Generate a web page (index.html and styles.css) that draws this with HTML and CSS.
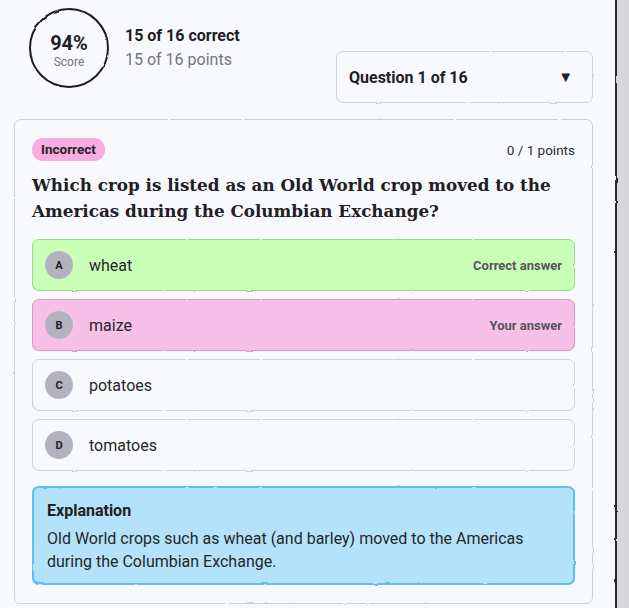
FILE: index.html
```html
<!DOCTYPE html>
<html>
<head>
<meta charset="utf-8">
<link rel="stylesheet" href="styles.css">
</head>
<body>
<svg class="defs" width="0" height="0" aria-hidden="true">
  <filter id="rough" x="-5%" y="-5%" width="110%" height="110%">
    <feTurbulence type="fractalNoise" baseFrequency="0.08" numOctaves="2" seed="3" result="n"/>
    <feDisplacementMap in="SourceGraphic" in2="n" scale="2.2" xChannelSelector="R" yChannelSelector="G"/>
  </filter>
</svg>
<div class="page">
  <div class="header">
    <div class="summary">
      <div class="score">
        <div class="score-num">94%</div>
        <div class="score-label">Score</div>
      </div>
      <div class="totals">
        <div class="correct">15 of 16 correct</div>
        <div class="points">15 of 16 points</div>
      </div>
    </div>
    <div class="select">
      <span>Question 1 of 16</span>
      <span class="caret">▼</span>
    </div>
  </div>

  <div class="card">
    <div class="card-top">
      <span class="pill">Incorrect</span>
      <span class="pts">0 / 1 points</span>
    </div>
    <h2 class="question">Which crop is listed as an Old World crop moved to the Americas during the Columbian Exchange?</h2>
    <div class="options">
      <div class="opt opt-correct"><span class="letter">A</span><span class="label">wheat</span><span class="tag">Correct answer</span></div>
      <div class="opt opt-wrong"><span class="letter">B</span><span class="label">maize</span><span class="tag">Your answer</span></div>
      <div class="opt"><span class="letter">C</span><span class="label">potatoes</span></div>
      <div class="opt"><span class="letter">D</span><span class="label">tomatoes</span></div>
    </div>
    <div class="explain">
      <div class="explain-title">Explanation</div>
      <div class="explain-text">Old World crops such as wheat (and barley) moved to the Americas during the Columbian Exchange.</div>
    </div>
  </div>
</div>
</body>
</html>
```
FILE: styles.css
```css
html, body {
  margin: 0;
  padding: 0;
  background: #d6d6db;
  font-family: Roboto, "Liberation Sans", sans-serif;
  color: #1f2024;
}
.defs { position: absolute; width: 0; height: 0; }
.page {
  width: 616px;
  height: 608px;
  background: #f8f9fd;
  position: relative;
  box-sizing: border-box;
  padding: 7px 23px 0 14px;
}
.page::after {
  content: "";
  position: absolute;
  top: -2px; bottom: -2px; right: -1px;
  width: 0;
  border-right: 2px solid #2a2a2e;
  filter: url(#rough);
}
.header {
  display: flex;
  justify-content: space-between;
  align-items: flex-start;
  height: 112px;
}
.summary {
  display: flex;
  align-items: flex-start;
  gap: 16px;
  padding-left: 15px;
}
.score {
  margin-top: 1px;
  width: 80px;
  height: 80px;
  box-sizing: border-box;
  border-radius: 50%;
  position: relative;
  display: flex;
  flex-direction: column;
  align-items: center;
  justify-content: center;
  padding-top: 4px;
}
.score::before {
  content: "";
  position: absolute;
  inset: 0;
  border: 2px solid #1c1c1f;
  border-radius: 50%;
  filter: url(#rough);
}
.score-num {
  font-size: 20px;
  font-weight: 700;
  line-height: 24px;
}
.score-label {
  font-size: 12px;
  color: #74757c;
  line-height: 15px;
}
.totals {
  padding-top: 18px;
}
.correct {
  font-size: 16px;
  font-weight: 700;
  line-height: 22px;
}
.points {
  font-size: 16px;
  color: #74757c;
  line-height: 26px;
}
.select {
  margin-top: 44px;
  width: 257px;
  height: 52px;
  box-sizing: border-box;
  position: relative;
  display: flex;
  align-items: center;
  justify-content: space-between;
  padding: 0 20px 0 13px;
  font-size: 16px;
  font-weight: 700;
}
.select::before, .card::before, .opt::before, .explain::before {
  content: "";
  position: absolute;
  inset: 0;
  border: 1px solid #d2d3d8;
  border-radius: 7px;
  filter: url(#rough);
  pointer-events: none;
}
.caret {
  font-size: 15px;
}
.card {
  position: relative;
  height: 485px;
  box-sizing: border-box;
  padding: 19px 18px 0 18px;
}
.card::before { border-color: #cfd0d5; }
.card-top {
  display: flex;
  justify-content: space-between;
  align-items: center;
  height: 23px;
}
.pill {
  background: #f8ace0;
  border-radius: 11px;
  padding: 0 9px;
  height: 23px;
  line-height: 23px;
  font-size: 13.5px;
  font-weight: 700;
  color: #25232a;
}
.pts {
  font-size: 13.5px;
  color: #2a2b30;
}
.question {
  font-family: "DejaVu Serif", "Liberation Serif", serif;
  font-size: 16.8px;
  font-weight: 700;
  line-height: 26px;
  margin: 11px 0 15px 0;
  color: #1f2024;
}
.options {
  display: flex;
  flex-direction: column;
  gap: 8px;
}
.opt {
  position: relative;
  height: 52px;
  box-sizing: border-box;
  display: flex;
  align-items: center;
  padding: 0 13px 0 12px;
  border-radius: 7px;
}
.opt-correct { background: #caffb8; }
.opt-correct::before { border-color: #9fd68d; }
.opt-wrong { background: #f7c0e8; }
.opt-wrong::before { border-color: #d79ac6; }
.letter {
  margin-left: 1px;
  width: 28px;
  height: 28px;
  border-radius: 50%;
  background: #b3b3c0;
  display: flex;
  align-items: center;
  justify-content: center;
  font-size: 11px;
  font-weight: 700;
  color: #1f2024;
  flex: none;
}
.label {
  margin-left: 16px;
  font-size: 16px;
  color: #25262b;
  flex: 1;
}
.tag {
  font-size: 13px;
  font-weight: 700;
  color: #55565c;
}
.explain {
  position: relative;
  margin-top: 15px;
  height: 99px;
  box-sizing: border-box;
  background: #b4e2fa;
  border-radius: 7px;
  padding: 15px 15px 0 15px;
}
.explain::before {
  border: 2px solid #5cbff5;
}
.explain-title {
  font-size: 16px;
  font-weight: 700;
  line-height: 20px;
  margin-bottom: 6px;
}
.explain-text {
  font-size: 16px;
  line-height: 23px;
  color: #25262b;
}
```
